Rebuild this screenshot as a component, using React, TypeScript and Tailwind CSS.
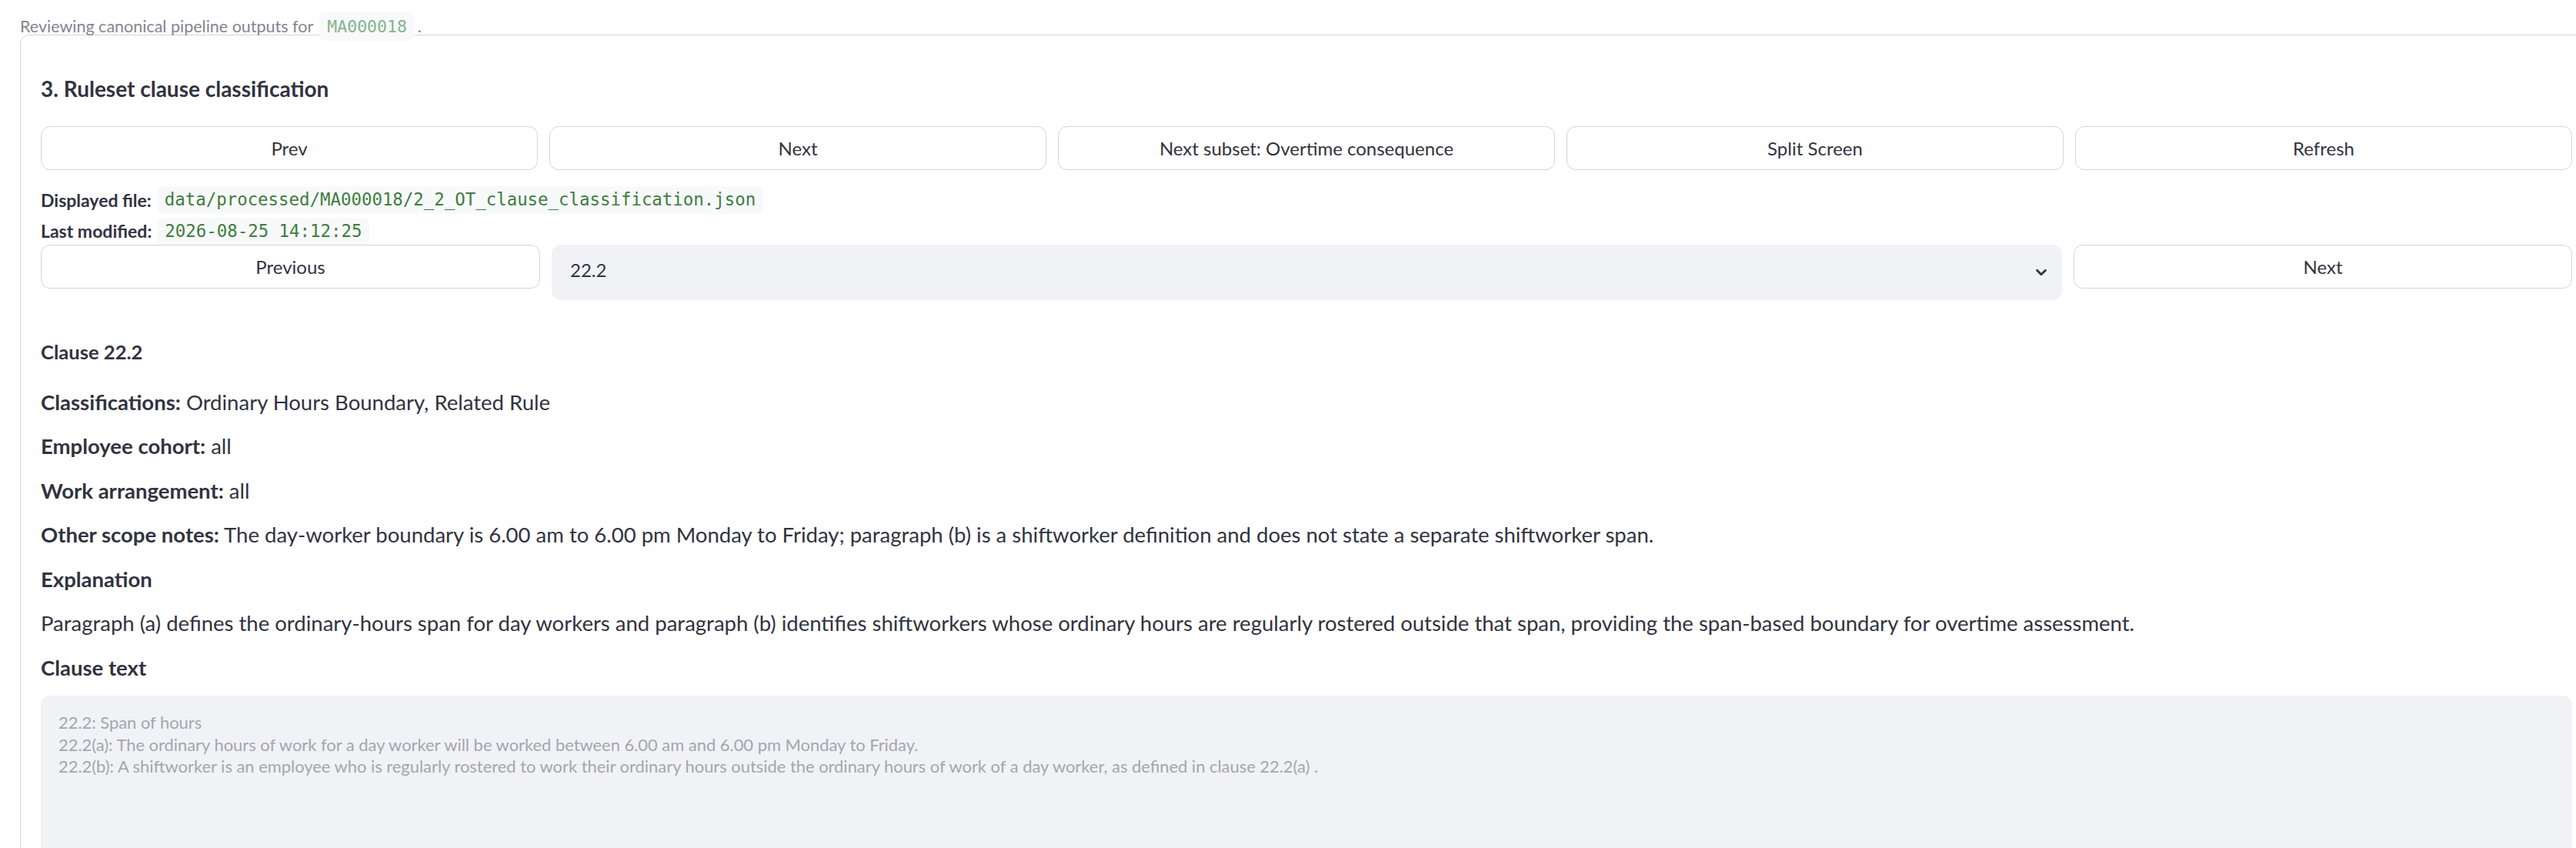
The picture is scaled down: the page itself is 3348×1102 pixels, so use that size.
import { ChevronDown } from 'lucide-react';

const topButtons = ['Prev', 'Next', 'Next subset: Overtime consequence', 'Split Screen', 'Refresh'];

const clauseLines = [
  '22.2: Span of hours',
  '22.2(a): The ordinary hours of work for a day worker will be worked between 6.00 am and 6.00 pm Monday to Friday.',
  '22.2(b): A shiftworker is an employee who is regularly rostered to work their ordinary hours outside the ordinary hours of work of a day worker, as defined in clause 22.2(a) .',
];

function OutlineButton({ label }: { label: string }) {
  return (
    <button className="h-[57px] w-full rounded-[12px] border border-[#d6d6d9] bg-white text-[24px] text-[#31333f]">
      {label}
    </button>
  );
}

function Field({ label, value }: { label: string; value: string }) {
  return (
    <div className="flex h-[57.5px] items-center text-[27.5px] text-[#31333f]">
      <p>
        <span className="font-bold">{label}:</span> {value}
      </p>
    </div>
  );
}

export default function App() {
  return (
    <div className="h-[1102px] w-[3348px] overflow-hidden bg-white font-['Lato',sans-serif] text-[#31333f]">
      {/* Caption above the review panel */}
      <div className="relative z-10 flex h-[45px] items-start pl-[26px] pt-[16px] text-[21.5px] text-[#83858f]">
        <span className="leading-[37px]">Reviewing canonical pipeline outputs for</span>
        <code className="ml-[8px] h-[37px] rounded-[8px] bg-[#f8f9fb] px-[10px] font-['DejaVu_Sans_Mono',monospace] text-[21.5px] leading-[37px] text-[#86b38c]">
          MA000018
        </code>
        <span className="ml-[4px] leading-[37px]">.</span>
      </div>

      {/* Bordered panel */}
      <div className="ml-[26px] w-[3344px] rounded-tl-[12px] rounded-tr-[12px] border border-[#d6d6d9] px-[26px] pt-[51px]">
        <h3 className="flex h-[36px] items-center text-[28px] font-bold">3. Ruleset clause classification</h3>

        <div className="mt-[31px] grid grid-cols-5 gap-[15px]">
          {topButtons.map((b) => (
            <OutlineButton key={b} label={b} />
          ))}
        </div>

        <div className="mt-[21px] flex h-[36px] items-center">
          <span className="text-[23px] font-bold">Displayed file:</span>
          <code className="ml-[7px] flex h-[36px] items-center rounded-[8px] bg-[#f8f9fb] px-[10px] font-['DejaVu_Sans_Mono',monospace] text-[22.4px] text-[#3e7d3e]">
            data/processed/MA000018/2_2_OT_clause_classification.json
          </code>
        </div>
        <div className="mt-[5px] flex h-[35px] items-center">
          <span className="text-[23px] font-bold">Last modified:</span>
          <code className="ml-[7px] flex h-[35px] items-center rounded-[8px] bg-[#f8f9fb] px-[10px] font-['DejaVu_Sans_Mono',monospace] text-[22.4px] text-[#3e7d3e]">
            2026-08-25 14:12:25
          </code>
        </div>

        {/* Clause picker */}
        <div className="mt-0 grid grid-cols-[649px_1fr_648px] items-start gap-[15px]">
          <OutlineButton label="Previous" />
          <div className="flex h-[72px] items-center justify-between rounded-[12px] bg-[#f0f2f6] pl-[24px] pr-[16px] text-[24px]">
            <span className="mb-[7px]">22.2</span>
            <ChevronDown className="h-[22px] w-[22px] text-[#31333f]" strokeWidth={3} />
          </div>
          <OutlineButton label="Next" />
        </div>

        {/* Clause details */}
        <div className="mt-[38px] flex h-[57.5px] items-center text-[25.6px] font-bold">Clause 22.2</div>
        <div className="mt-[8px] flex flex-col">
          <Field label="Classifications" value="Ordinary Hours Boundary, Related Rule" />
          <Field label="Employee cohort" value="all" />
          <Field label="Work arrangement" value="all" />
          <Field
            label="Other scope notes"
            value="The day-worker boundary is 6.00 am to 6.00 pm Monday to Friday; paragraph (b) is a shiftworker definition and does not state a separate shiftworker span."
          />
          <div className="flex h-[57.5px] items-center text-[27.5px] font-bold">Explanation</div>
          <div className="flex h-[57.5px] items-center text-[27.5px]">
            Paragraph (a) defines the ordinary-hours span for day workers and paragraph (b) identifies shiftworkers whose
            ordinary hours are regularly rostered outside that span, providing the span-based boundary for overtime
            assessment.
          </div>
          <div className="flex h-[57.5px] items-center text-[27.5px] font-bold">Clause text</div>
        </div>

        <div className="mt-[8px] h-[320px] rounded-[12px] bg-[#f0f2f6] px-[23px] pt-[21px] text-[21.9px] leading-[28.5px] text-[#a4a6ad]">
          {clauseLines.map((l) => (
            <div key={l}>{l}</div>
          ))}
        </div>
      </div>
    </div>
  );
}
